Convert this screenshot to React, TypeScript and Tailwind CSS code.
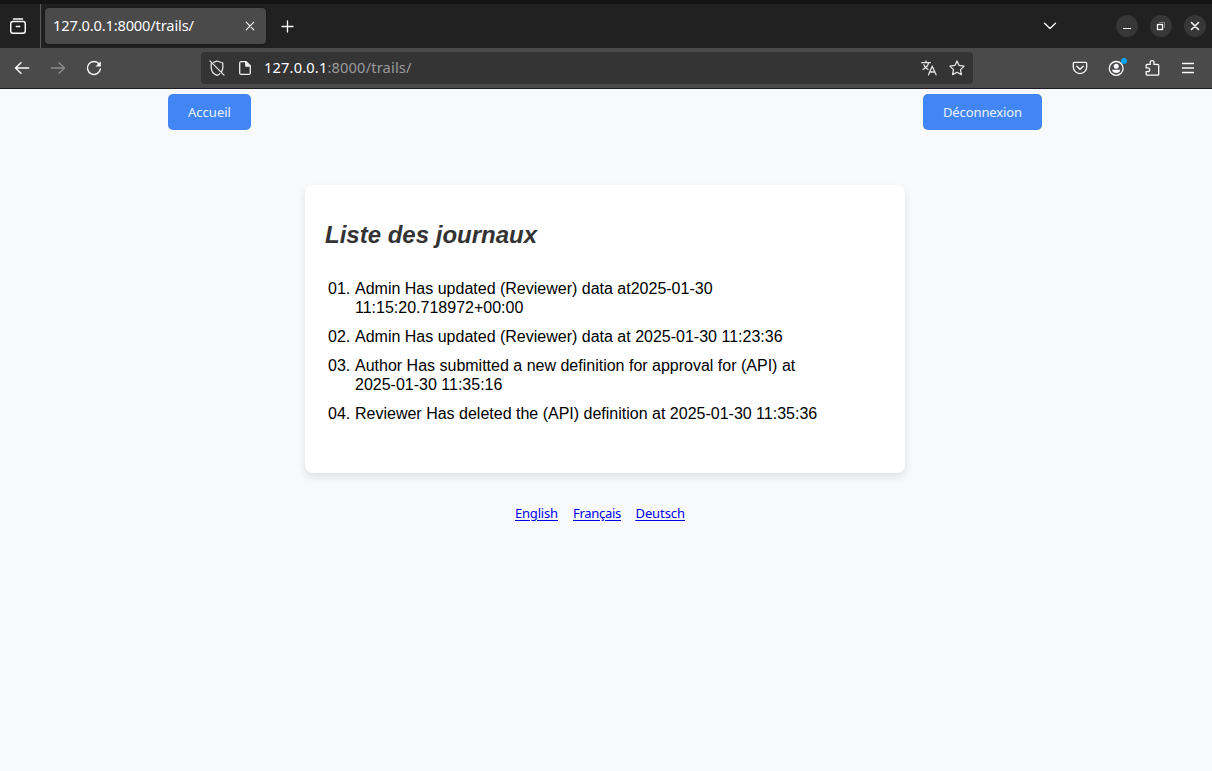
import type { ReactNode } from "react";

function Icon({ children, className = "" }: { children: ReactNode; className?: string }) {
  return (
    <svg
      viewBox="0 0 16 16"
      className={`block h-4 w-4 shrink-0 ${className}`}
      fill="none"
      stroke="currentColor"
      strokeWidth="1.3"
      strokeLinecap="round"
      strokeLinejoin="round"
    >
      {children}
    </svg>
  );
}

function TabBar() {
  return (
    <div className="flex h-12 items-center border-t-4 border-[#141414] bg-[#212121] text-[#fbfbfe]">
      <div className="flex h-full w-[41px] items-center border-r border-[#5a5a5a] pl-[10px]">
        <Icon>
          <path d="M3.4 1h9.2" />
          <path d="M2.9 3.5h10.2a2.2 2.2 0 0 1 2.2 2.2v7.3a2.2 2.2 0 0 1-2.2 2.2H2.9A2.2 2.2 0 0 1 .7 13V5.7a2.2 2.2 0 0 1 2.2-2.2Z" strokeWidth="1.5" />
          <path d="M6.3 8.6h3.4" strokeWidth="1.5" />
        </Icon>
      </div>
      <div className="ml-1 flex h-9 w-[221px] items-center justify-between rounded bg-[#4a4a4a] pr-2 pl-[8px] shadow-[0_0_3px_rgba(0,0,0,0.5)]">
        <span className="pb-[2px] text-[14.67px] leading-5 tracking-[-0.16px]">127.0.0.1:8000/trails/</span>
        <Icon>
          <path d="m4.2 4.2 7.6 7.6M11.8 4.2l-7.6 7.6" strokeWidth="1.1" />
        </Icon>
      </div>
      <Icon className="ml-[14px]">
        <path d="M7.5 3v11M2 8.5h11" />
      </Icon>
      <div className="ml-auto flex items-center">
        <Icon className="mr-[58px]">
          <path d="m2.5 5.3 5.5 5.2 5.5-5.2" />
        </Icon>
        <div className="mr-[6px] flex gap-3">
          <span className="flex h-[22px] w-[22px] items-center justify-center rounded-full bg-[#373737]">
            <Icon>
              <path d="M4 10.5h8" strokeLinecap="butt" strokeWidth="1" />
            </Icon>
          </span>
          <span className="flex h-[22px] w-[22px] items-center justify-center rounded-full bg-[#373737]">
            <Icon>
              <path d="M6 4.5h5.5V10" stroke="#858585" strokeWidth="1" strokeLinecap="butt" strokeLinejoin="miter" />
              <rect x="4.5" y="6.5" width="5" height="5" strokeWidth="1.3" strokeLinejoin="miter" />
            </Icon>
          </span>
          <span className="flex h-[22px] w-[22px] items-center justify-center rounded-full bg-[#373737]">
            <Icon>
              <path d="m4.5 4.5 7 7M11.5 4.5l-7 7" strokeWidth="1.5" />
            </Icon>
          </span>
        </div>
      </div>
    </div>
  );
}

function Toolbar() {
  return (
    <div className="flex h-[41px] items-center border-b border-[#1c1b22] bg-[#4a4a4a] text-[#fbfbfe]">
      <div className="flex w-[201px] items-center gap-5 pl-[14px]">
        <Icon>
          <path d="M7 2.7 1.5 8 7 13.3M1.7 8h13" strokeWidth="1.4" />
        </Icon>
        <Icon className="text-[#8c8c8c]">
          <path d="M9 2.7 14.5 8 9 13.3M14.3 8h-13" strokeWidth="1.4" />
        </Icon>
        <Icon>
          <path d="M13.2 4.1A6.5 6.5 0 1 0 14.4 9" strokeWidth="1.4" />
          <path d="M14.8 1.2v5.3H9.5z" fill="currentColor" stroke="none" />
        </Icon>
      </div>
      <div className="flex h-8 w-[772px] items-center rounded bg-[#343434] px-2">
        <Icon className="text-[#e4e4e6]">
          <path d="M4.7 2.3 8 1l5.8 2v4.2c0 1.8-.4 3.2-1.2 4.4M10.8 13.6c-.8.8-1.8 1.4-2.8 1.7-3.6-1.3-5.8-4.2-5.8-8.1V3.6" />
          <path d="m1 .9 14 14.2" />
        </Icon>
        <Icon className="ml-3 text-[#f0f0f2]">
          <path d="M4.1 1.7h5l4.2 4.1v7.1a1.4 1.4 0 0 1-1.4 1.4H4.1a1.4 1.4 0 0 1-1.4-1.4V3.1a1.4 1.4 0 0 1 1.4-1.4Z" />
          <path d="M8.8 2v4.1H13" fill="currentColor" />
        </Icon>
        <span className="ml-[11px] pb-[2px] text-[14.67px] leading-5 tracking-[0.15px] text-[#9a9a9c]">
          <span className="text-[#fbfbfe]">127.0.0.1</span>:8000/trails/
        </span>
        <Icon className="ml-auto text-[#e4e4e6]">
          <path d="M.7 2.7h8.6M5 .8v1.9M2 9.5c3-1.5 5-3.5 5.6-6.8M2.8 4.8C3.7 7 5.2 8.6 7 9.4M7.5 14.8l3.7-8.6 3.9 8.6M8.8 12h5.1" />
        </Icon>
        <Icon className="ml-3 text-[#e4e4e6]">
          <path d="m8 .9 2.1 4.5 5 .7-3.6 3.5.9 5L8 12.2l-4.4 2.4.9-5L.9 6.1l5-.7Z" />
        </Icon>
      </div>
      <div className="ml-auto flex gap-5 pr-4">
        <Icon>
          <path d="M2.4 2.3h11.2a1.1 1.1 0 0 1 1.1 1.1v3.5a6.7 6.7 0 0 1-13.4 0V3.4a1.1 1.1 0 0 1 1.1-1.1Z" />
          <path d="M4.8 6.3 8 9.3l3.2-3" />
        </Icon>
        <div className="relative">
          <Icon>
            <circle cx="8.2" cy="8.4" r="6.9" />
            <circle cx="8.2" cy="6.2" r="2.5" fill="currentColor" stroke="none" />
            <path d="M3.9 9.7h8.6c-.4 2-2.1 3.3-4.3 3.3s-3.9-1.3-4.3-3.3Z" fill="currentColor" stroke="none" />
          </Icon>
          <span className="absolute -top-[2px] left-[13px] h-[6px] w-[6px] rounded-full bg-[#00a8f8]" />
        </div>
        <Icon>
          <path d="M3.2 15.2a1 1 0 0 1-1-1v-2.5h1.6a1.9 1.9 0 0 0 0-3.8H2.2V5.4a1 1 0 0 1 1-1h3V2.6a1.9 1.9 0 0 1 3.8 0v1.8h3.7a1 1 0 0 1 1 1v8.8a1 1 0 0 1-1 1Z" />
        </Icon>
        <Icon>
          <path d="M2.5 3.5h11M2.5 8h11M2.5 12.5h11" />
        </Icon>
      </div>
    </div>
  );
}

const entries = [
  "Admin Has updated (Reviewer) data at2025-01-30 11:15:20.718972+00:00",
  "Admin Has updated (Reviewer) data at 2025-01-30 11:23:36",
  "Author Has submitted a new definition for approval for (API) at 2025-01-30 11:35:16",
  "Reviewer Has deleted the (API) definition at 2025-01-30 11:35:36",
];

export default function App() {
  return (
    <div className="flex h-[771px] w-[1212px] flex-col overflow-hidden bg-[#f8f9fb] font-['Noto_Sans',sans-serif]">
      <TabBar />
      <Toolbar />
      <nav className="flex justify-between pt-[5px] pr-[170px] pl-[168px] text-[13px] text-white/90">
        <button className="h-9 w-[83px] rounded-[5px] bg-[#4285f4] pt-[2px] tracking-[0px]">Accueil</button>
        <button className="h-9 w-[119px] rounded-[5px] bg-[#4285f4] pt-[2px] tracking-[-0.1px]">Déconnexion</button>
      </nav>
      <main className="mt-[55px] ml-[305px] h-[288px] w-[600px] rounded-lg bg-white px-5 pt-9 font-['Liberation_Sans',Arial,sans-serif] shadow-[0_4px_8px_rgba(0,0,0,0.1)]">
        <h1 className="text-[24px] leading-7 font-bold text-[#333333] italic">Liste des journaux</h1>
        <ol className="mt-[30px] flex w-[500px] flex-col gap-[10px] text-[16px] leading-[19px] text-black">
          {entries.map((entry, i) => (
            <li key={entry} className="flex">
              <span className="w-[30px] shrink-0 pl-[3px]">0{i + 1}.</span>
              <span className="w-[470px]">{entry}</span>
            </li>
          ))}
        </ol>
      </main>
      <footer className="mt-[31px] flex pl-[515px] text-[13px] leading-[19px] text-[#0000ee] underline underline-offset-2">
        <a href="#en" className="w-[58px] tracking-[-0.2px]">English</a>
        <a href="#fr" className="w-[62.5px] tracking-[-0.3px]">Français</a>
        <a href="#de" className="tracking-[-0.1px]">Deutsch</a>
      </footer>
    </div>
  );
}
